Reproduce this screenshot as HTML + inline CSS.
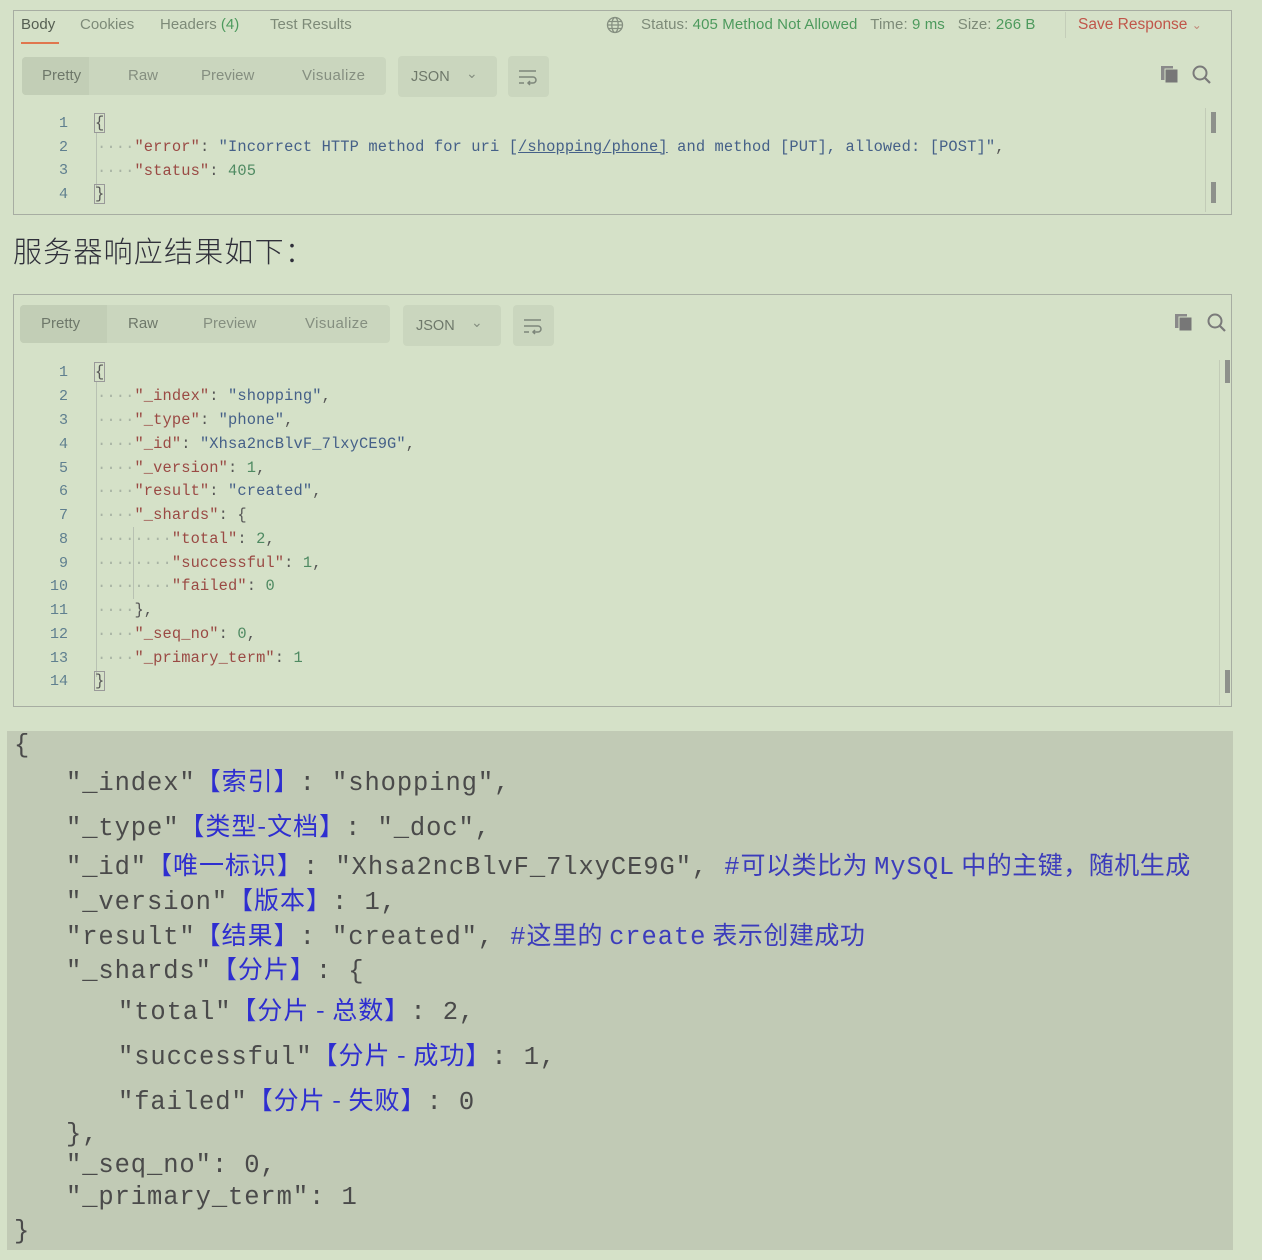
<!DOCTYPE html>
<html><head><meta charset="utf-8">
<style>
*{margin:0;padding:0;box-sizing:border-box}
body{width:1262px;height:1260px;background:#d5e1c8;position:relative;overflow:hidden;font-family:"Liberation Sans",sans-serif}
.abs{position:absolute;white-space:pre}
.panel{position:absolute;border:1.5px solid #a7ada2}
.tab{position:absolute;font-size:15px;color:#7d8a78;top:16px}
.grp{position:absolute;background:#cad6be;border-radius:4px}
.seg{position:absolute;font-size:15px;color:#858f80}
.code{font-family:"Liberation Mono",monospace;font-size:15.4px;letter-spacing:0.12px}
.ln{position:absolute;width:30px;text-align:right;font-family:"Liberation Mono",monospace;font-size:15px;color:#5f7f8f}
.k{color:#9a4a44}.s{color:#456088}.n{color:#4f8a62}.d{color:#a8b3a4}.p{color:#555}
.big{font-family:"Liberation Mono","Noto Sans CJK SC",monospace;font-size:25.5px;color:#4a4a4a;letter-spacing:0.9px}
.c{color:#2e2ed0;font-family:"Noto Sans CJK SC",sans-serif;font-size:25px;letter-spacing:1px}
.cm{color:#3c3cbb;font-family:"Noto Sans CJK SC",sans-serif;font-size:25px;letter-spacing:0.5px}
.cmm{color:#3c3cbb}
</style></head><body>

<!-- Panel 1 -->
<div class="panel" style="left:13px;top:10px;width:1219px;height:205px"></div>
<div class="tab" style="left:21px;color:#555e52">Body</div>
<div style="position:absolute;left:21px;top:42px;width:38px;height:2px;background:#e0764e"></div>
<div class="tab" style="left:80px">Cookies</div>
<div class="tab" style="left:160px">Headers <span style="color:#4d9a5d">(4)</span></div>
<div class="tab" style="left:270px">Test Results</div>
<svg class="abs" style="left:606px;top:16px" width="18" height="18" viewBox="0 0 18 18"><g fill="none" stroke="#858f80" stroke-width="1.3"><circle cx="9" cy="9" r="7.5"/><ellipse cx="9" cy="9" rx="3.2" ry="7.5"/><path d="M1.5 9h15M2.5 5.5h13M2.5 12.5h13"/></g></svg>
<div class="abs" style="left:641px;top:16px;font-size:15px;letter-spacing:0.1px;color:#7d8a78">Status: <span style="color:#4d9a5d">405 Method Not Allowed</span>&nbsp;&nbsp;&nbsp;Time: <span style="color:#4d9a5d">9 ms</span>&nbsp;&nbsp;&nbsp;Size: <span style="color:#4d9a5d">266 B</span></div>
<div style="position:absolute;left:1065px;top:12px;width:1px;height:26px;background:#c4cdb9"></div>
<div class="abs" style="left:1078px;top:16px;font-size:15.5px;color:#c0564a">Save Response <span style="font-size:12px;color:#c08878">&#8964;</span></div>

<div class="grp" style="left:22px;top:57px;width:364px;height:38px"></div>
<div style="position:absolute;left:22px;top:57px;width:67px;height:38px;background:#c2ceb6;border-radius:4px 0 0 4px"></div>
<div class="seg" style="left:42px;top:67px;color:#6e786a">Pretty</div>
<div class="seg" style="left:128px;top:67px">Raw</div>
<div class="seg" style="left:201px;top:67px">Preview</div>
<div class="seg" style="left:302px;top:67px;letter-spacing:0.4px">Visualize</div>
<div class="grp" style="left:398px;top:56px;width:99px;height:41px"></div>
<div class="seg" style="left:411px;top:69px;font-size:14.5px;color:#6e786a">JSON</div>
<div class="seg" style="left:466px;top:65px;font-size:14px">&#8964;</div>
<div class="grp" style="left:508px;top:56px;width:41px;height:41px"></div>
<svg class="abs" style="left:518px;top:68px" width="20" height="18" viewBox="0 0 20 18"><g fill="none" stroke="#7d867a" stroke-width="1.5"><path d="M1 3h17M1 9h14a3 3 0 0 1 0 6h-5M1 15h5M12 13l-2 2 2 2"/></g></svg>
<svg class="abs" style="left:1160px;top:65px" width="22" height="20" viewBox="0 0 22 20"><rect x="1" y="1" width="12" height="14" fill="#8a8a8a"/><rect x="5" y="4" width="13" height="14" fill="#777" stroke="#d5e1c8" stroke-width="1"/></svg>
<svg class="abs" style="left:1191px;top:64px" width="22" height="22" viewBox="0 0 22 22"><circle cx="9" cy="9" r="6.5" fill="none" stroke="#7a7a7a" stroke-width="2"/><path d="M14 14l5 5" stroke="#7a7a7a" stroke-width="2.2"/></svg>
<div style="position:absolute;left:1205px;top:108px;width:1px;height:104px;background:#c2cbb7"></div>
<div style="position:absolute;left:1211px;top:112px;width:5px;height:21px;background:#8d918b"></div>
<div style="position:absolute;left:1211px;top:182px;width:5px;height:21px;background:#8d918b"></div>

<div style="position:absolute;left:96px;top:132px;width:1px;height:56px;background:#b8c1b2"></div>
<div class="ln" style="left:38px;top:115px">1</div>
<div class="ln" style="left:38px;top:139px">2</div>
<div class="ln" style="left:38px;top:162px">3</div>
<div class="ln" style="left:38px;top:186px">4</div>
<div class="abs code" style="left:95px;top:114px"><span style="outline:1px solid #999;color:#555">{</span></div>
<div class="abs code" style="left:97px;top:138px"><span class="d">····</span><span class="k">"error"</span><span class="p">: </span><span class="s">"Incorrect HTTP method for uri [<u>/shopping/phone]</u> and method [PUT], allowed: [POST]"</span><span class="p">,</span></div>
<div class="abs code" style="left:97px;top:162px"><span class="d">····</span><span class="k">"status"</span><span class="p">: </span><span class="n">405</span></div>
<div class="abs code" style="left:95px;top:185px"><span style="outline:1px solid #999;color:#555">}</span></div>

<!-- Heading -->
<div class="abs" style="left:13px;top:230px;font-family:'Noto Sans CJK SC',sans-serif;font-weight:300;font-size:29px;letter-spacing:1.2px;color:#2f2f3a;line-height:40px">服务器响应结果如下：</div>

<!-- Panel 2 -->
<div class="panel" style="left:13px;top:294px;width:1219px;height:413px"></div>
<div class="grp" style="left:20px;top:305px;width:370px;height:38px"></div>
<div style="position:absolute;left:20px;top:305px;width:87px;height:38px;background:#c2ceb6;border-radius:4px 0 0 4px"></div>
<div class="seg" style="left:41px;top:315px;color:#6e786a">Pretty</div>
<div class="seg" style="left:128px;top:315px;color:#6e786a">Raw</div>
<div class="seg" style="left:203px;top:315px">Preview</div>
<div class="seg" style="left:305px;top:315px;letter-spacing:0.4px">Visualize</div>
<div class="grp" style="left:403px;top:305px;width:98px;height:41px"></div>
<div class="seg" style="left:416px;top:318px;font-size:14.5px;color:#6e786a">JSON</div>
<div class="seg" style="left:471px;top:314px;font-size:14px">&#8964;</div>
<div class="grp" style="left:513px;top:305px;width:41px;height:41px"></div>
<svg class="abs" style="left:523px;top:317px" width="20" height="18" viewBox="0 0 20 18"><g fill="none" stroke="#7d867a" stroke-width="1.5"><path d="M1 3h17M1 9h14a3 3 0 0 1 0 6h-5M1 15h5M12 13l-2 2 2 2"/></g></svg>
<svg class="abs" style="left:1174px;top:313px" width="22" height="20" viewBox="0 0 22 20"><rect x="1" y="1" width="12" height="14" fill="#8a8a8a"/><rect x="5" y="4" width="13" height="14" fill="#777" stroke="#d5e1c8" stroke-width="1"/></svg>
<svg class="abs" style="left:1206px;top:312px" width="22" height="22" viewBox="0 0 22 22"><circle cx="9" cy="9" r="6.5" fill="none" stroke="#7a7a7a" stroke-width="2"/><path d="M14 14l5 5" stroke="#7a7a7a" stroke-width="2.2"/></svg>
<div style="position:absolute;left:1219px;top:360px;width:1px;height:345px;background:#c2cbb7"></div>
<div style="position:absolute;left:1225px;top:360px;width:5px;height:23px;background:#8d918b"></div>
<div style="position:absolute;left:1225px;top:670px;width:5px;height:23px;background:#8d918b"></div>

<div style="position:absolute;left:96px;top:382px;width:1px;height:295px;background:#b8c1b2"></div>
<div style="position:absolute;left:133px;top:527px;width:1px;height:72px;background:#b8c1b2"></div>
<div class="ln" style="left:38px;top:364px">1</div>
<div class="ln" style="left:38px;top:388px">2</div>
<div class="ln" style="left:38px;top:412px">3</div>
<div class="ln" style="left:38px;top:436px">4</div>
<div class="ln" style="left:38px;top:460px">5</div>
<div class="ln" style="left:38px;top:483px">6</div>
<div class="ln" style="left:38px;top:507px">7</div>
<div class="ln" style="left:38px;top:531px">8</div>
<div class="ln" style="left:38px;top:555px">9</div>
<div class="ln" style="left:38px;top:578px">10</div>
<div class="ln" style="left:38px;top:602px">11</div>
<div class="ln" style="left:38px;top:626px">12</div>
<div class="ln" style="left:38px;top:650px">13</div>
<div class="ln" style="left:38px;top:673px">14</div>
<div class="abs code" style="left:95px;top:363px"><span style="outline:1px solid #999;color:#555">{</span></div>
<div class="abs code" style="left:97px;top:387px"><span class="d">····</span><span class="k">"_index"</span><span class="p">: </span><span class="s">"shopping"</span><span class="p">,</span></div>
<div class="abs code" style="left:97px;top:411px"><span class="d">····</span><span class="k">"_type"</span><span class="p">: </span><span class="s">"phone"</span><span class="p">,</span></div>
<div class="abs code" style="left:97px;top:435px"><span class="d">····</span><span class="k">"_id"</span><span class="p">: </span><span class="s">"Xhsa2ncBlvF_7lxyCE9G"</span><span class="p">,</span></div>
<div class="abs code" style="left:97px;top:459px"><span class="d">····</span><span class="k">"_version"</span><span class="p">: </span><span class="n">1</span><span class="p">,</span></div>
<div class="abs code" style="left:97px;top:482px"><span class="d">····</span><span class="k">"result"</span><span class="p">: </span><span class="s">"created"</span><span class="p">,</span></div>
<div class="abs code" style="left:97px;top:506px"><span class="d">····</span><span class="k">"_shards"</span><span class="p">: {</span></div>
<div class="abs code" style="left:97px;top:530px"><span class="d">········</span><span class="k">"total"</span><span class="p">: </span><span class="n">2</span><span class="p">,</span></div>
<div class="abs code" style="left:97px;top:554px"><span class="d">········</span><span class="k">"successful"</span><span class="p">: </span><span class="n">1</span><span class="p">,</span></div>
<div class="abs code" style="left:97px;top:577px"><span class="d">········</span><span class="k">"failed"</span><span class="p">: </span><span class="n">0</span></div>
<div class="abs code" style="left:97px;top:601px"><span class="d">····</span><span class="p">},</span></div>
<div class="abs code" style="left:97px;top:625px"><span class="d">····</span><span class="k">"_seq_no"</span><span class="p">: </span><span class="n">0</span><span class="p">,</span></div>
<div class="abs code" style="left:97px;top:649px"><span class="d">····</span><span class="k">"_primary_term"</span><span class="p">: </span><span class="n">1</span></div>
<div class="abs code" style="left:95px;top:672px"><span style="outline:1px solid #999;color:#555">}</span></div>

<!-- Bottom code block -->
<div style="position:absolute;left:7px;top:731px;width:1226px;height:519px;background:#c1cab5"></div>
<div class="abs big" style="left:14px;top:731px">{</div>
<div class="abs big" style="left:66px;top:762px">"_index"<span class="c">【索引】</span>: "shopping",</div>
<div class="abs big" style="left:66px;top:807px">"_type"<span class="c">【类型-文档】</span>: "_doc",</div>
<div class="abs big" style="left:66px;top:846px">"_id"<span class="c">【唯一标识】</span>: "Xhsa2ncBlvF_7lxyCE9G", <span class="cmm">#<span class="cm">可以类比为 </span>MySQL<span class="cm"> 中的主键，随机生成</span></span></div>
<div class="abs big" style="left:66px;top:881px">"_version"<span class="c">【版本】</span>: 1,</div>
<div class="abs big" style="left:66px;top:916px">"result"<span class="c">【结果】</span>: "created", <span class="cmm">#<span class="cm">这里的 </span>create<span class="cm"> 表示创建成功</span></span></div>
<div class="abs big" style="left:66px;top:950px">"_shards"<span class="c">【分片】</span>: {</div>
<div class="abs big" style="left:118px;top:991px">"total"<span class="c">【分片 - 总数】</span>: 2,</div>
<div class="abs big" style="left:118px;top:1036px">"successful"<span class="c">【分片 - 成功】</span>: 1,</div>
<div class="abs big" style="left:118px;top:1081px">"failed"<span class="c">【分片 - 失败】</span>: 0</div>
<div class="abs big" style="left:66px;top:1120px">},</div>
<div class="abs big" style="left:66px;top:1151px">"_seq_no": 0,</div>
<div class="abs big" style="left:66px;top:1183px">"_primary_term": 1</div>
<div class="abs big" style="left:14px;top:1217px">}</div>
</body></html>
